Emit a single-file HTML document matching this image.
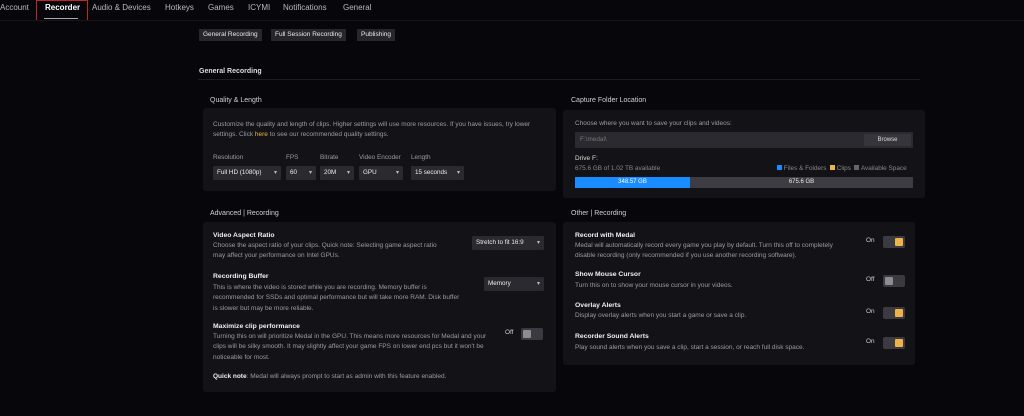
<!DOCTYPE html>
<html><head><meta charset="utf-8"><style>
*{margin:0;padding:0;box-sizing:border-box}
body{width:1024px;height:416px;background:#07070b;font-family:"Liberation Sans",sans-serif;color:#e4e4e8;position:relative;overflow:hidden;font-size:7px}
.a{position:absolute;white-space:nowrap}
.nav{font-size:8px;color:#b8b8c0;top:3px}
.tab{background:#26262c;color:#e8e8ec;font-size:6.5px;padding:0 4px;height:12px;line-height:12px;top:29px}
.h{color:#cfcfd6;font-size:7px}
.panel{background:#131317;border-radius:3px}
.d{color:#9a9aa4;font-size:6.5px;line-height:10.3px}
.t{color:#f0f0f4;font-size:6.8px;font-weight:bold}
.sel{background:#2a2a30;color:#eee;font-size:6.3px;height:14px;line-height:14px;padding-left:4px;border-radius:1px}
.sel:after{content:"▾";position:absolute;right:4px;font-size:6px;color:#bbb}
.lab{color:#9a9aa4;font-size:6.4px}
.tg{width:22px;height:12px;background:#3a3a40;border-radius:2px}
.tg i{position:absolute;top:2px;width:8px;height:8px;border-radius:1px}
.on i{right:2px;background:#f0b24a}.off i{left:2px;background:#8c8c94}
.oo{color:#cfcfd6;font-size:6.4px}
</style></head><body>
<div class="a nav" style="left:0">Account</div>
<div class="a nav" style="left:45px;color:#fff;font-weight:bold">Recorder</div>
<div class="a" style="left:44px;top:18px;width:34px;height:1px;background:#aaa"></div>
<div class="a" style="left:36px;top:0;width:52px;height:21px;border:1px solid #c0262a"></div>
<div class="a nav" style="left:92px">Audio &amp; Devices</div>
<div class="a nav" style="left:165px">Hotkeys</div>
<div class="a nav" style="left:208px">Games</div>
<div class="a nav" style="left:248px">ICYMI</div>
<div class="a nav" style="left:283px">Notifications</div>
<div class="a nav" style="left:343px">General</div>
<div class="a" style="left:0;top:20px;width:1024px;height:1px;background:#151519"></div>
<div class="a tab" style="left:199px">General Recording</div>
<div class="a tab" style="left:271px">Full Session Recording</div>
<div class="a tab" style="left:357px">Publishing</div>
<div class="a" style="left:199px;top:68px;font-size:7px;font-weight:bold;color:#dcdce2">General Recording</div>
<div class="a" style="left:198px;top:79px;width:722px;height:1px;background:#1d1d22"></div>

<div class="a h" style="left:210px;top:97px">Quality &amp; Length</div>
<div class="a panel" style="left:203px;top:108px;width:353px;height:83px"></div>
<div class="a d" style="left:213px;top:120px">Customize the quality and length of clips. Higher settings will use more resources. If you have issues, try lower<br>settings. Click <span style="color:#f0b24a">here</span> to see our recommended quality settings.</div>
<div class="a lab" style="left:213px;top:154px">Resolution</div>
<div class="a lab" style="left:286px;top:154px">FPS</div>
<div class="a lab" style="left:320px;top:154px">Bitrate</div>
<div class="a lab" style="left:359px;top:154px">Video Encoder</div>
<div class="a lab" style="left:411px;top:154px">Length</div>
<div class="a sel" style="left:213px;top:166px;width:68px">Full HD (1080p)</div>
<div class="a sel" style="left:286px;top:166px;width:30px">60</div>
<div class="a sel" style="left:320px;top:166px;width:34px">20M</div>
<div class="a sel" style="left:359px;top:166px;width:44px">GPU</div>
<div class="a sel" style="left:411px;top:166px;width:53px">15 seconds</div>

<div class="a h" style="left:571px;top:97px">Capture Folder Location</div>
<div class="a panel" style="left:563px;top:110px;width:362px;height:88px"></div>
<div class="a d" style="left:575px;top:119px">Choose where you want to save your clips and videos:</div>
<div class="a" style="left:575px;top:132px;width:338px;height:16px;background:#2a2a30"></div>
<div class="a lab" style="left:580px;top:136px;color:#777">F:\medal\</div>
<div class="a" style="left:864px;top:134px;width:47px;height:12px;background:#35353b;color:#ddd;font-size:6px;text-align:center;line-height:12px">Browse</div>
<div class="a d" style="left:575px;top:154px;color:#ddd">Drive F:</div>
<div class="a lab" style="left:575px;top:165px;color:#888">675.6 GB of 1.02 TB available</div>
<div class="a lab" style="left:777px;top:165px;color:#888"><span style="display:inline-block;width:5px;height:5px;background:#1a8cff"></span> Files &amp; Folders &nbsp;<span style="display:inline-block;width:5px;height:5px;background:#f0b24a"></span> Clips &nbsp;<span style="display:inline-block;width:5px;height:5px;background:#666"></span> Available Space</div>
<div class="a" style="left:575px;top:177px;width:338px;height:11px;background:#3c3c42"></div>
<div class="a" style="left:575px;top:177px;width:115px;height:11px;background:#1a8cff;color:#fff;font-size:6px;text-align:center;line-height:11px">348.57 GB</div>
<div class="a" style="left:690px;top:177px;width:223px;height:11px;color:#eee;font-size:6px;text-align:center;line-height:11px">675.6 GB</div>

<div class="a h" style="left:210px;top:210px">Advanced | Recording</div>
<div class="a panel" style="left:203px;top:222px;width:353px;height:170px"></div>
<div class="a t" style="left:213px;top:232px">Video Aspect Ratio</div>
<div class="a d" style="left:213px;top:241px">Choose the aspect ratio of your clips. Quick note: Selecting game aspect ratio<br>may affect your performance on Intel GPUs.</div>
<div class="a sel" style="left:472px;top:236px;width:72px">Stretch to fit 16:9</div>
<div class="a t" style="left:213px;top:273px">Recording Buffer</div>
<div class="a d" style="left:213px;top:283px">This is where the video is stored while you are recording. Memory buffer is<br>recommended for SSDs and optimal performance but will take more RAM. Disk buffer<br>is slower but may be more reliable.</div>
<div class="a sel" style="left:484px;top:277px;width:60px">Memory</div>
<div class="a t" style="left:213px;top:323px">Maximize clip performance</div>
<div class="a d" style="left:213px;top:332px">Turning this on will prioritize Medal in the GPU. This means more resources for Medal and your<br>clips will be silky smooth. It may slightly affect your game FPS on lower end pcs but it won't be<br>noticeable for most.</div>
<div class="a oo" style="left:505px;top:329px">Off</div>
<div class="a tg off" style="left:521px;top:328px"><i></i></div>
<div class="a d" style="left:213px;top:372px"><b style="color:#eee">Quick note</b>: Medal will always prompt to start as admin with this feature enabled.</div>

<div class="a h" style="left:571px;top:210px">Other | Recording</div>
<div class="a panel" style="left:563px;top:222px;width:352px;height:143px"></div>
<div class="a t" style="left:575px;top:232px">Record with Medal</div>
<div class="a d" style="left:575px;top:241px">Medal will automatically record every game you play by default. Turn this off to completely<br>disable recording (only recommended if you use another recording software).</div>
<div class="a oo" style="left:866px;top:237px">On</div>
<div class="a tg on" style="left:883px;top:236px"><i></i></div>
<div class="a t" style="left:575px;top:271px">Show Mouse Cursor</div>
<div class="a d" style="left:575px;top:281px">Turn this on to show your mouse cursor in your videos.</div>
<div class="a oo" style="left:866px;top:276px">Off</div>
<div class="a tg off" style="left:883px;top:275px"><i></i></div>
<div class="a t" style="left:575px;top:302px">Overlay Alerts</div>
<div class="a d" style="left:575px;top:311px">Display overlay alerts when you start a game or save a clip.</div>
<div class="a oo" style="left:866px;top:308px">On</div>
<div class="a tg on" style="left:883px;top:307px"><i></i></div>
<div class="a t" style="left:575px;top:333px">Recorder Sound Alerts</div>
<div class="a d" style="left:575px;top:343px">Play sound alerts when you save a clip, start a session, or reach full disk space.</div>
<div class="a oo" style="left:866px;top:338px">On</div>
<div class="a tg on" style="left:883px;top:337px"><i></i></div>
</body></html>
